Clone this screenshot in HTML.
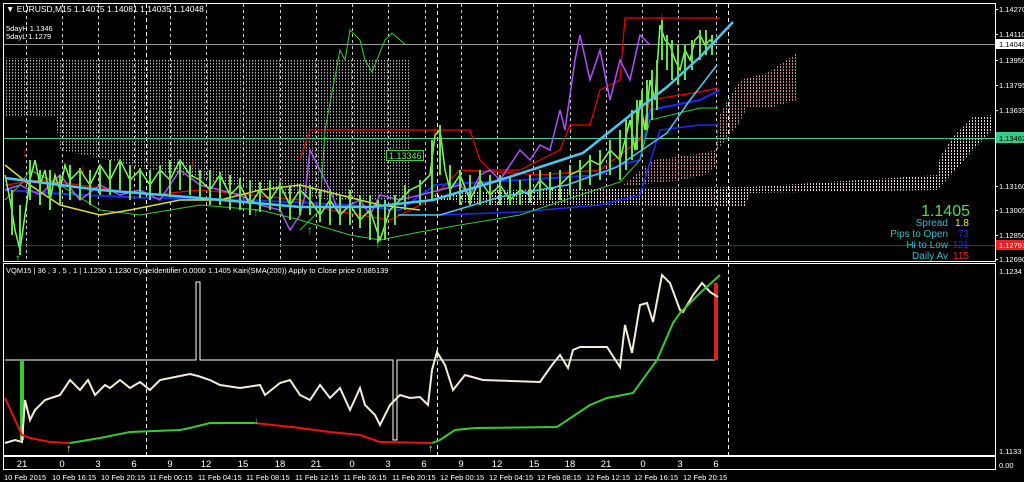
<!DOCTYPE html>
<html><head><meta charset="utf-8"><style>
html,body{margin:0;padding:0;background:#000;width:1024px;height:482px;overflow:hidden}
svg{display:block}
text{font-family:"Liberation Sans",sans-serif}
</style></head><body>
<svg width="1024" height="482" viewBox="0 0 1024 482" xmlns="http://www.w3.org/2000/svg">
<defs>
<pattern id="dw" width="3" height="3" patternUnits="userSpaceOnUse"><rect x="0" y="0" width="1" height="1.5" fill="#bbbbbb"/></pattern>
<pattern id="dp" width="3" height="3" patternUnits="userSpaceOnUse"><rect x="0" y="0" width="1" height="2" fill="#c88a8a"/></pattern>
<pattern id="dpw" width="3" height="3" patternUnits="userSpaceOnUse"><rect x="0" y="0" width="1" height="2" fill="#e8d0d0"/></pattern>
</defs>
<rect width="1024" height="482" fill="#000"/>
<g stroke="#fff" stroke-width="1" fill="none">
<rect x="3.5" y="3.5" width="992" height="258"/>
<rect x="3.5" y="263.5" width="992" height="192"/>
<rect x="3.5" y="456.5" width="992" height="13"/>
</g>
<g stroke="#ccc" stroke-width="1" stroke-dasharray="3,3">
<path d="M26.5 4V262M62.5 4V262M98.5 4V262M134.5 4V262M170.5 4V262M206.5 4V262M243.5 4V262M280.5 4V262M316.5 4V262M352.5 4V262M388.5 4V262M425.5 4V262M461.5 4V262M497.5 4V262M533.5 4V262M570.5 4V262M606.5 4V262M642.5 4V262M678.5 4V262M716.5 4V262"/>
</g>
<g stroke="#fff" stroke-width="1" stroke-dasharray="4,3">
<path d="M146.5 4V456M437.5 4V456M728.5 4V456"/>
</g>
<path d="M5 58H55V60H410V200L330 200 300 195 250 190 200 178 150 170 110 160 60 150 55 117H5Z" fill="url(#dw)"/>
<path d="M718 117L740 80 767 73 797 53 797 100 773 107 747 108 737 127 717 150Z" fill="url(#dp)"/>
<path d="M623 185L653 160 703 153 717 150 717 165 705 175 680 180 640 185Z" fill="url(#dp)"/>
<path d="M620 188L750 187 937 175 940 157 953 137 973 117 993 115 993 130 973 150 953 173 937 190 750 193 745 207 620 205 490 205 440 200 430 195 500 190Z" fill="url(#dpw)"/>
<line x1="4" y1="44.5" x2="995" y2="44.5" stroke="#999"/>
<line x1="4" y1="138.5" x2="995" y2="138.5" stroke="#4c9"/>
<line x1="4" y1="245.5" x2="995" y2="245.5" stroke="#b00"/>
<polyline fill="none" stroke="#e00" stroke-width="1.2" points="300,160 310,130 470,130 480,160 490,170 520,170 540,160 560,150 570,125 590,125 600,90 620,80 625,18 720,18"/>
<polyline fill="none" stroke="#e00" stroke-width="1.2" points="5,185 40,180 80,185 150,195 200,190 300,200 330,210 360,215 390,220 410,210 430,200 460,170 500,172 540,175 600,170 640,140 650,100 680,95 700,92 718,88"/>
<polyline fill="none" stroke="#1a2aff" stroke-width="2" points="5,190 80,195 150,198 250,200 350,205 400,210 435,185 520,180 600,175 620,165 640,160 650,110 700,100 720,90"/>
<polyline fill="none" stroke="#1a2aff" stroke-width="1.5" points="440,215 520,212 600,205 640,195 660,130 700,125 718,125"/>
<polyline fill="none" stroke="#b050ff" stroke-width="1.5" points="5,190 20,185 40,195 60,175 80,200 100,185 120,195 140,190 160,200 180,170 200,185 220,190 240,195 260,205 280,210 290,230 300,215 305,195 310,150 320,170 330,190 340,215 350,205 360,200 370,215 380,195 400,200 420,195 440,190 460,185 470,195 480,175 490,170 500,180 510,165 520,150 530,160 540,145 550,150 560,110 565,130 575,60 580,35 590,80 600,50 610,100 620,60 630,80 640,35 650,45"/>
<polyline fill="none" stroke="#3c3" stroke-width="1" points="300,230 320,210 325,130 340,50 345,60 350,30 360,40 365,60 372,72 385,40 392,33 400,40 405,44"/>
<polyline fill="none" stroke="#3c3" stroke-width="1" points="5,200 20,185 30,170 40,175 60,185 100,210 140,215 200,205 260,210 300,220 350,235 380,240 420,232 460,225 520,215 580,195 620,182 640,160 650,120 700,108 718,108"/>
<polyline fill="none" stroke="#dd3" stroke-width="1.5" points="5,165 30,185 60,205 80,210 100,215 130,210 180,200 220,200 260,190 300,185 340,195 380,205 420,210"/>
<polyline fill="none" stroke="#7cff5c" stroke-width="1.5" points="5,175 10,200 15,230 20,250 25,215 30,180 35,160 40,185 45,170 50,200 55,175 60,190 65,165 70,180 80,170 90,185 100,165 110,180 120,160 130,180 140,170 150,185 160,170 170,180 180,160 190,175 200,180 210,190 220,175 230,195 240,185 250,205 260,190 270,200 280,185 290,205 300,190 310,200 320,215 330,200 340,215 350,205 360,220 370,210 380,240 385,225 390,210 400,200 410,190 420,185 430,175 435,135 440,130 445,170 450,190 460,175 470,200 480,180 490,195 500,185 510,200 520,190 530,195 540,180 550,190 560,185 570,175 580,170 590,160 600,165 610,150 620,160 630,120 635,150 640,100 645,130 650,80 655,100 660,25 665,40 670,45 675,60 680,70 685,50 690,60 695,40 700,35 705,45 710,40 715,45"/>
<g stroke="#6be04a" stroke-width="2">
<path d="M12 190V235M20 205V255M30 160V200M40 170V205M50 170V210M60 175V205M70 165V200M80 168V200M90 170V205M100 165V195M110 160V195M120 160V190M130 165V200M140 168V198M150 170V200M160 165V195M170 160V195M180 160V190M190 165V195M200 170V200M210 170V205M220 172V205M230 175V210M240 178V210M250 180V215M260 182V212M270 180V210M280 182V212M290 185V220M300 186V215M310 185V215M320 190V222M330 190V225M340 195V225M350 190V225M360 195V228M370 195V240M378 200V242M385 200V240M395 195V225M405 185V210M420 180V205M432 140V200M440 125V175M450 165V200M460 170V205M470 175V205M480 170V205M490 175V205M500 175V205M510 178V205M520 180V205M530 175V203M540 170V200M550 172V200M560 170V200M570 165V195M580 160V190M590 155V185M600 150V180M610 140V175M620 130V180M626 120V170M632 110V160M637 100V150M642 90V150M647 80V130M652 70V120M657 60V110M662 20V60M667 35V70M672 40V80M678 45V85M685 45V80M692 40V70M700 30V60M706 30V55M712 35V55"/>
</g>
<polyline fill="none" stroke="#4cc8f0" stroke-width="2.5" points="5,178 100,190 200,198 300,207 370,207 433,200 500,180 583,153 633,113 667,87 700,57 733,22"/>
<polyline fill="none" stroke="#4cc8f0" stroke-width="1.5" points="398,215 440,215 500,197 567,185 617,167 667,133 690,100 717,65"/>
<g fill="#f22" font-size="12" font-weight="bold">
<text x="22" y="156">↓</text><text x="80" y="172">↓</text><text x="190" y="166">↓</text><text x="432" y="134">↓</text><text x="568" y="130">↓</text><text x="659" y="20">↓</text></g>
<g fill="#3f3" font-size="12" font-weight="bold">
<text x="15" y="262">↑</text><text x="253" y="216">↑</text><text x="307" y="234">↑</text><text x="375" y="248">↑</text></g>
<rect x="386.5" y="150.5" width="37" height="10" fill="#000" stroke="#4c4"/>
<text x="389" y="159" font-size="9" fill="#6e6">1.13346</text>
<text x="6" y="12" font-size="8.5" fill="#fff">▼ EURUSD,M15  1.14075 1.14081 1.14035 1.14048</text>
<text x="6" y="31" font-size="7.5" fill="#fff">5dayH 1.1346</text>
<text x="6" y="39" font-size="7.5" fill="#fff">5dayL 1.1279</text>
<text x="970" y="216" font-size="16" fill="#5d5" text-anchor="end">1.1405</text>
<g font-size="10" text-anchor="end">
<text x="948" y="226" fill="#3bc">Spread</text><text x="969" y="226" fill="#ee3">1.8</text>
<text x="948" y="237" fill="#3bc">Pips to Open</text><text x="969" y="237" fill="#22e">73</text>
<text x="948" y="248" fill="#3bc">Hi to Low</text><text x="969" y="248" fill="#22e">121</text>
<text x="948" y="259" fill="#3bc">Daily Av</text><text x="969" y="259" fill="#e22">115</text></g>
<g font-size="7.5" fill="#fff">
<text x="999" y="12">1.14270</text><text x="999" y="37">1.14110</text>
<text x="999" y="63">1.13950</text><text x="999" y="88">1.13795</text>
<text x="999" y="113">1.13635</text><text x="999" y="189">1.13160</text>
<text x="999" y="213">1.13005</text><text x="999" y="238">1.12850</text>
<text x="999" y="262">1.12690</text><text x="999" y="274">1.1234</text>
<text x="999" y="454">1.1133</text><text x="999" y="468">0.00</text></g>
<rect x="996" y="39" width="28" height="10" fill="#fff"/><text x="999" y="47" font-size="7.5" fill="#000">1.14048</text>
<rect x="996" y="132" width="28" height="11" fill="#3c8"/><text x="999" y="141" font-size="7.5" fill="#000">1.13462</text>
<rect x="996" y="240" width="28" height="10" fill="#e22"/><text x="999" y="248" font-size="7.5" fill="#fff">1.12791</text>
<g stroke="#fff"><path d="M995 9.5h3M995 34.5h3M995 60.5h3M995 85.5h3M995 110.5h3M995 186.5h3M995 210.5h3M995 235.5h3M995 259.5h3"/></g>
<text x="6" y="273" font-size="7.5" fill="#fff">VQM15 |  36 , 3 , 5 , 1  |  1.1230 1.1230  CycleIdentifier 0.0000 1.1405  Kairi(SMA(200)) Apply to Close price 0.685139</text>
<polyline fill="none" stroke="#fff" stroke-width="1" points="5,360 196,360 196,282 200,282 200,360 393,360 393,440 397,440 397,360 715,360"/>
<rect x="20" y="360" width="4" height="80" fill="#3c3"/>
<rect x="714" y="283" width="4" height="77" fill="#d22"/>
<polyline fill="none" stroke="#f3ecd8" stroke-width="2" points="5,443 15,440 22,442 25,400 30,420 35,410 45,400 60,395 70,380 80,390 88,380 95,395 105,385 110,388 120,380 130,388 140,382 150,390 160,380 180,376 190,374 198,376 210,380 220,385 240,388 260,385 265,395 280,383 290,380 300,395 310,400 320,385 330,398 340,388 350,410 360,388 365,405 375,415 380,425 390,405 395,400 400,395 410,398 420,397 428,405 432,370 437,352 445,365 453,390 465,375 483,380 540,382 552,365 560,355 568,368 573,350 580,347 607,347 620,367 625,325 632,353 640,305 647,303 653,322 662,275 670,283 680,310 683,312 693,295 702,283 710,292 718,297"/>
<polyline fill="none" stroke="#e11" stroke-width="2" points="5,398 22,435 30,438 50,442 70,443"/>
<polyline fill="none" stroke="#3c3" stroke-width="2" points="70,443 100,438 130,432 180,430 190,428 210,423 255,423"/>
<polyline fill="none" stroke="#e11" stroke-width="2" points="255,423 300,428 330,432 360,435 380,442 432,443"/>
<polyline fill="none" stroke="#3c3" stroke-width="2" points="432,443 440,440 455,430 475,428 557,427 590,405 607,398 633,393 657,360 673,323 680,313 700,293 720,275"/>
<text x="66" y="452" font-size="11" fill="#ee3">↑</text><text x="428" y="452" font-size="11" fill="#ee3">↑</text><text x="254" y="424" font-size="10" fill="#3ce">↓</text>
<g font-size="9.5" fill="#fff" text-anchor="middle">
<text x="22" y="467">21</text><text x="62" y="467">0</text><text x="98" y="467">3</text><text x="134" y="467">6</text><text x="170" y="467">9</text><text x="206" y="467">12</text><text x="243" y="467">15</text><text x="280" y="467">18</text><text x="316" y="467">21</text><text x="352" y="467">0</text><text x="388" y="467">3</text><text x="424" y="467">6</text><text x="461" y="467">9</text><text x="497" y="467">12</text><text x="534" y="467">15</text><text x="570" y="467">18</text><text x="606" y="467">21</text><text x="643" y="467">0</text><text x="680" y="467">3</text><text x="716" y="467">6</text></g>
<g font-size="7.5" fill="#fff">
<text x="4" y="480">10 Feb 2015</text><text x="52" y="480">10 Feb 16:15</text><text x="101" y="480">10 Feb 20:15</text><text x="149" y="480">11 Feb 00:15</text><text x="198" y="480">11 Feb 04:15</text><text x="246" y="480">11 Feb 08:15</text><text x="295" y="480">11 Feb 12:15</text><text x="343" y="480">11 Feb 16:15</text><text x="392" y="480">11 Feb 20:15</text><text x="440" y="480">12 Feb 00:15</text><text x="489" y="480">12 Feb 04:15</text><text x="537" y="480">12 Feb 08:15</text><text x="586" y="480">12 Feb 12:15</text><text x="634" y="480">12 Feb 16:15</text><text x="683" y="480">12 Feb 20:15</text></g>
</svg>
</body></html>
